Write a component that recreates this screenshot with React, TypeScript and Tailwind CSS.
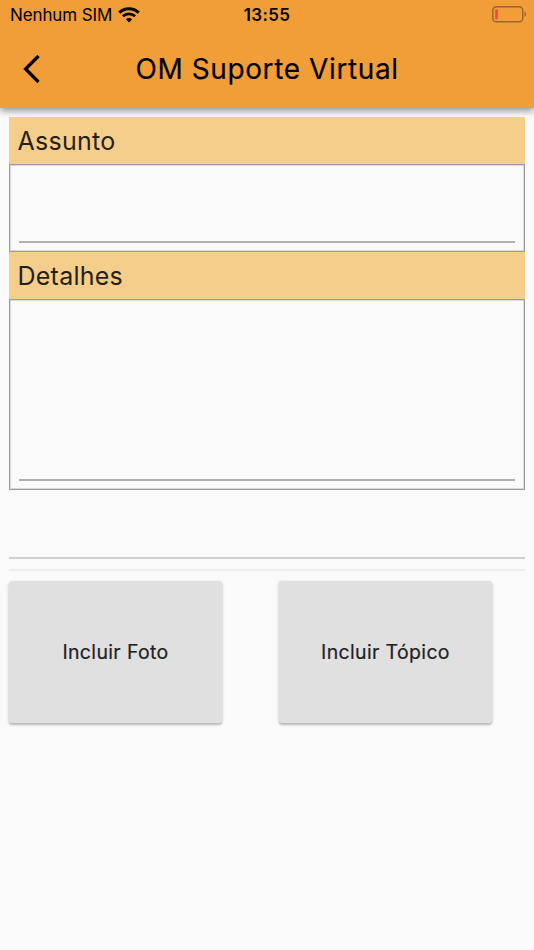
interface FieldProps {
    label: string;
    multiline?: boolean;
}

interface ActionButtonProps {
    label: string;
}

function WifiIcon() {
    return (
        <svg width="22" height="16" viewBox="0 0 22 16" fill="none" stroke="#000" aria-hidden="true">
            <path d="M1.3 5.6C6.7 0.3 15.3 0.3 20.7 5.6" strokeWidth="3" />
            <path d="M4.9 9.3C8.3 6 13.7 6 17.1 9.3" strokeWidth="2.7" />
            <path d="M11 15.4L7.9 12.2C9.6 10.5 12.4 10.5 14.1 12.2Z" fill="#000" stroke="none" />
        </svg>
    );
}

function BatteryIcon() {
    return (
        <svg width="35" height="17" viewBox="0 0 35 17" fill="none" aria-hidden="true">
            <rect x="0.8" y="0.8" width="30" height="15" rx="3.6" stroke="#99662a" strokeWidth="1.4" />
            <rect x="3.2" y="3.2" width="2.6" height="10.2" rx="1" fill="#f0483c" />
            <path d="M32.5 5.8C34.5 6.3 34.5 10.3 32.5 10.8Z" fill="#99662a" />
        </svg>
    );
}

function StatusBar() {
    return (
        <div className="grid h-[30px] grid-cols-3 items-center pr-[8px] pl-[10px] text-[17px] leading-[30px]">
            <div className="flex items-center gap-[6px]">
                <span className="whitespace-nowrap tracking-[-0.12px]">Nenhum SIM</span>
                <WifiIcon />
            </div>
            <span className="-ml-[2px] text-center font-semibold tracking-[0.3px]">13:55</span>
            <div className="-mr-[1px] flex items-center justify-end pb-[2px]">
                <BatteryIcon />
            </div>
        </div>
    );
}

function Field({ label, multiline }: FieldProps) {
    return (
        <section>
            <h2 className="h-[47px] bg-[#f6ce8b] pt-[1px] pl-[8.5px] text-[25px] leading-[47px] tracking-[0.25px] text-[#251f15]">
                {label}
            </h2>
            <div className={`flex flex-col justify-end border border-[#9d9d9d] px-[9px] pb-[8px] shadow-[inset_0_0_0_1px_#d8d8d8] ${multiline ? 'h-[191px]' : 'h-[88px]'}`}>
                <div className="h-[2px] bg-[#b0b0b0]" />
            </div>
        </section>
    );
}

function ActionButton({ label }: ActionButtonProps) {
    return (
        <button className="h-[142px] w-[213px] rounded-[3px] bg-[#e0e0e0] pt-[1px] text-[19.5px] font-normal tracking-[0.35px] text-[#222] [-webkit-text-stroke:0.2px_#222] shadow-[0_2px_2px_rgba(0,0,0,0.2),0_1px_4px_rgba(0,0,0,0.12)]">
            {label}
        </button>
    );
}

export default function App() {
    return (
        <div className="h-[950px] w-[534px] overflow-hidden bg-[#fafafa] font-['Inter',sans-serif] text-black">
            <header className="h-[108px] bg-[#f19e38] shadow-[0_3px_7px_rgba(0,0,0,0.4)]">
                <StatusBar />
                <div className="grid h-[78px] grid-cols-[64px_1fr_64px] items-center">
                    <svg className="ml-[22px]" width="20" height="30" viewBox="0 0 20 30" fill="none" stroke="#000" strokeWidth="3.3" aria-hidden="true">
                        <path d="M16.5 2L3.6 15L16.5 28" />
                    </svg>
                    <h1 className="text-center text-[28px] font-normal tracking-[0.6px] whitespace-nowrap [-webkit-text-stroke:0.15px_#000]">OM Suporte Virtual</h1>
                </div>
            </header>

            <main className="px-[9px] pt-[9px]">
                <Field label="Assunto" />
                <Field label="Detalhes" multiline />

                <div className="mt-[67px] h-[2px] bg-[#cfcfcf]" />
                <div className="mt-[10px] h-[2px] bg-[#eeeeee]" />

                <div className="mt-[10px] flex gap-[57px]">
                    <ActionButton label="Incluir Foto" />
                    <ActionButton label="Incluir Tópico" />
                </div>
            </main>
        </div>
    );
}
